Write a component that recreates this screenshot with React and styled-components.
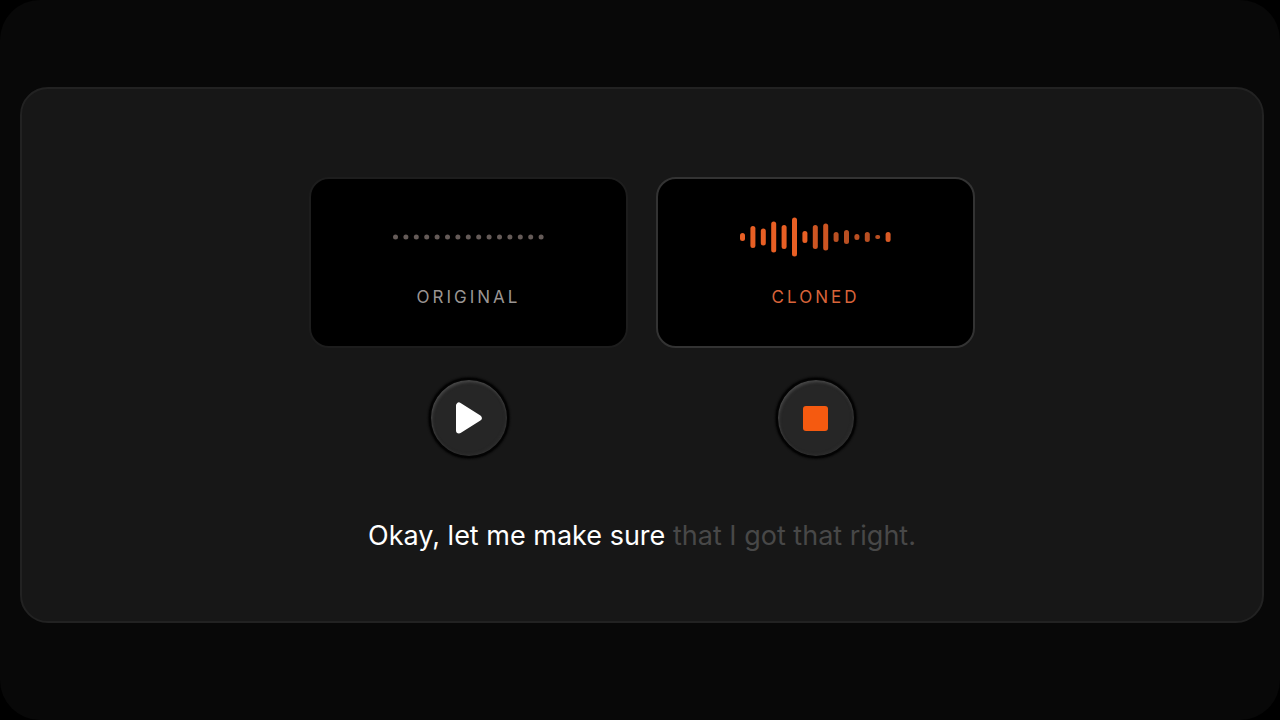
import { useState } from "react";
import styled, { createGlobalStyle } from "styled-components";

const GlobalStyle = createGlobalStyle`
  * {
    box-sizing: border-box;
  }

  body {
    margin: 0;
    background-color: #000000;
    font-family: Inter, "Liberation Sans", sans-serif;
  }
`;

const Page = styled.main`
  min-height: 100vh;
  display: flex;
  flex-direction: column;
  justify-content: center;
  padding: 87px 16px 97px 20px;
  background-color: #080808;
  border-radius: 40px;
`;

const Panel = styled.section`
  display: flex;
  flex-direction: column;
  align-items: center;
  padding: 88px 24px 65px;
  background-color: #171717;
  border: 2px solid #222222;
  border-radius: 28px;
`;

const Voices = styled.div`
  display: flex;
  flex-wrap: wrap;
  justify-content: center;
  gap: 28px;
`;

const Voice = styled.div`
  display: flex;
  flex-direction: column;
  align-items: center;
  gap: 30px;
`;

const Card = styled.div`
  display: flex;
  flex-direction: column;
  align-items: center;
  gap: 28px;
  width: 319px;
  padding: 38px 24px 37px;
  background-color: #000000;
  border: ${(props) => (props.$active ? "2px solid #333333" : "2px solid #1d1d1d")};
  border-radius: 20px;
`;

const Wave = styled.svg`
  display: block;
  width: 151px;
  height: 40px;
`;

const Label = styled.span`
  font-size: 17px;
  line-height: 24px;
  letter-spacing: 3px;
  color: ${(props) => (props.$active ? "#d9643a" : "#9a9593")};
`;

const RoundButton = styled.button`
  display: flex;
  align-items: center;
  justify-content: center;
  width: 80px;
  height: 80px;
  padding: 0;
  border: 2px solid #030303;
  border-radius: 50%;
  background-color: #262626;
  box-shadow:
    0 0 2px 1px #050505,
    inset 1px 2px 3px #484848,
    inset -1px -1px 3px #303030;
  cursor: pointer;
`;

const Caption = styled.p`
  margin: 58px 0 0;
  font-size: 27px;
  line-height: 40px;
  color: #ffffff;
`;

const Upcoming = styled.span`
  color: #484848;
`;

const STEP = 10.4;

const voices = [
  { id: "original", name: "ORIGINAL", bars: Array(15).fill(5) },
  {
    id: "cloned",
    name: "CLONED",
    bars: [8, 22, 17, 31, 24, 39, 12, 24, 27, 10, 14, 6, 10, 4, 10],
  },
];

const barColor = (index, active) => {
  if (!active) return "#655b58";
  if (index < 7) return "#e85f24";
  if (index < 9) return "#cd5522";
  return index < 14 ? "#b94f22" : "#d95a25";
};

function Waveform({ bars, active }) {
  return (
    <Wave viewBox="0 0 151 40" aria-hidden="true">
      {bars.map((height, index) => (
        <rect
          key={index}
          x={index * STEP}
          y={20 - height / 2}
          width="5"
          height={height}
          rx={Math.min(2.5, height / 2)}
          fill={barColor(index, active)}
        />
      ))}
    </Wave>
  );
}

function PlayIcon() {
  return (
    <svg width="28" height="32" viewBox="0 0 28 32" aria-hidden="true">
      <path
        d="M4 3.5v25L23.8 16z"
        fill="#ffffff"
        stroke="#ffffff"
        strokeWidth="6"
        strokeLinejoin="round"
      />
    </svg>
  );
}

function StopIcon() {
  return (
    <svg width="25" height="25" viewBox="0 0 25 25" aria-hidden="true">
      <rect width="25" height="25" rx="3" fill="#f55a10" />
    </svg>
  );
}

function App() {
  const [playing, setPlaying] = useState("cloned");

  const handleToggle = (id) => {
    setPlaying(playing === id ? undefined : id);
  };

  return (
    <>
      <GlobalStyle />
      <Page>
        <Panel>
          <Voices>
            {voices.map((voice) => {
              const active = voice.id === playing;
              return (
                <Voice key={voice.id}>
                  <Card $active={active}>
                    <Waveform bars={voice.bars} active={active} />
                    <Label $active={active}>{voice.name}</Label>
                  </Card>
                  <RoundButton
                    type="button"
                    aria-label={active ? "Stop" : "Play"}
                    onClick={() => handleToggle(voice.id)}
                  >
                    {active ? <StopIcon /> : <PlayIcon />}
                  </RoundButton>
                </Voice>
              );
            })}
          </Voices>
          <Caption>
            Okay, let me make sure <Upcoming>that I got that right.</Upcoming>
          </Caption>
        </Panel>
      </Page>
    </>
  );
}

export default App;
